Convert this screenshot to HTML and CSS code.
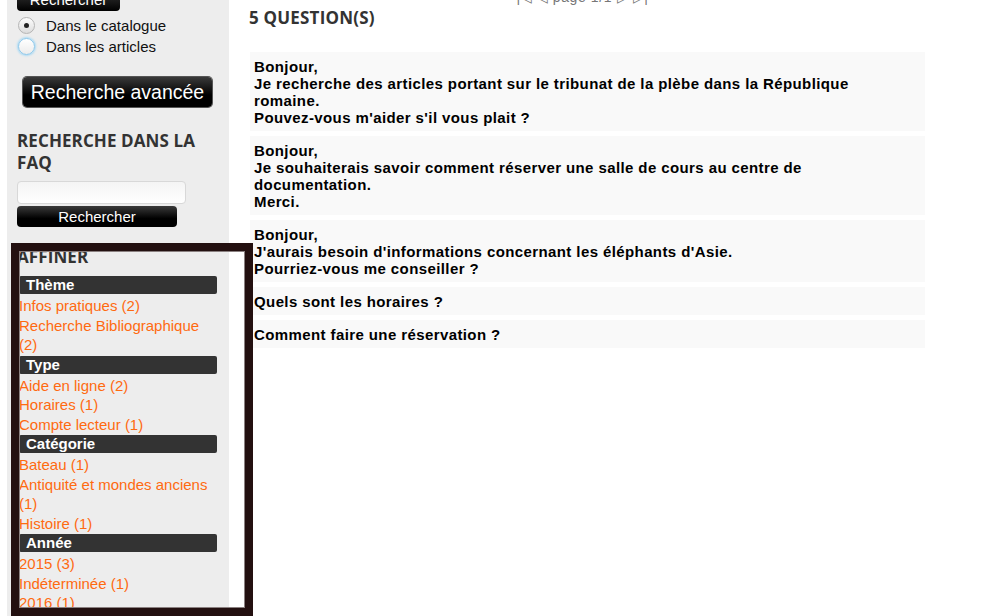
FILE: index.html
```html
<!DOCTYPE html>
<html lang="fr">
<head>
<meta charset="utf-8">
<title>FAQ</title>
<link rel="stylesheet" href="styles.css">
</head>
<body>
<div class="page">
  <aside class="sidebar">
    <div class="btn-top">Rechercher</div>
    <label class="radio-row"><span class="radio checked"></span>Dans le catalogue</label>
    <label class="radio-row"><span class="radio focus"></span>Dans les articles</label>
    <div class="btn-adv">Recherche avancée</div>
    <h2 class="side-title">RECHERCHE DANS LA FAQ</h2>
    <div class="faq-input"></div>
    <div class="btn-search">Rechercher</div>
    <h2 class="side-title affiner">AFFINER</h2>
    <div class="facets">
      <div class="facet-head">Thème</div>
      <a class="facet-link">Infos pratiques (2)</a>
      <a class="facet-link">Recherche Bibliographique (2)</a>
      <div class="facet-head">Type</div>
      <a class="facet-link">Aide en ligne (2)</a>
      <a class="facet-link">Horaires (1)</a>
      <a class="facet-link">Compte lecteur (1)</a>
      <div class="facet-head">Catégorie</div>
      <a class="facet-link">Bateau (1)</a>
      <a class="facet-link">Antiquité et mondes anciens (1)</a>
      <a class="facet-link">Histoire (1)</a>
      <div class="facet-head">Année</div>
      <a class="facet-link">2015 (3)</a>
      <a class="facet-link">Indéterminée (1)</a>
      <a class="facet-link">2016 (1)</a>
    </div>
  </aside>
  <main class="main">
    <div class="pager">|◁ ◁ page 1/1 ▷ ▷|</div>
    <h1 class="count">5 QUESTION(S)</h1>
    <div class="questions">
      <div class="q">Bonjour,<br>Je recherche des articles portant sur le tribunat de la plèbe dans la République romaine.<br>Pouvez-vous m'aider s'il vous plait ?</div>
      <div class="q">Bonjour,<br>Je souhaiterais savoir comment réserver une salle de cours au centre de documentation.<br>Merci.</div>
      <div class="q">Bonjour,<br>J'aurais besoin d'informations concernant les éléphants d'Asie.<br>Pourriez-vous me conseiller ?</div>
      <div class="q">Quels sont les horaires ?</div>
      <div class="q">Comment faire une réservation ?</div>
    </div>
  </main>
</div>
<div class="frame"></div>
</body>
</html>
```

FILE: styles.css
```css
html, body {
  margin: 0;
  padding: 0;
  background: #fff;
  overflow: hidden;
}
body {
  font-family: "Liberation Sans", Arial, sans-serif;
  color: #000;
  height: 616px;
}
.page {
  display: flex;
  align-items: flex-start;
}
.sidebar {
  margin-left: 7px;
  width: 222px;
  min-height: 616px;
  box-sizing: border-box;
  padding: 0 10px;
  background: #ededed;
}
.btn-top {
  width: 103px;
  height: 22px;
  margin-top: -11px;
  border-radius: 4px;
  background: linear-gradient(#3a3a3a, #000);
  color: #fff;
  font-size: 15px;
  line-height: 22px;
  text-align: center;
}
.radio-row {
  display: flex;
  align-items: center;
  gap: 11px;
  height: 21px;
  margin-left: 1px;
  font-size: 15px;
  color: #111;
}
.radio-row:first-of-type {
  margin-top: 4px;
}
.radio {
  position: relative;
  width: 17px;
  height: 17px;
  border-radius: 50%;
  box-sizing: border-box;
  border: 1px solid #b5b5b5;
  background: linear-gradient(#fdfdfd, #dcdcdc);
  flex: none;
}
.radio.checked::after {
  content: "";
  position: absolute;
  left: 5px;
  top: 5px;
  width: 5px;
  height: 5px;
  border-radius: 50%;
  background: #222;
}
.radio.focus {
  border-color: #8cc8ec;
  background: linear-gradient(#ffffff, #ececec);
  box-shadow: 0 0 2px 1px #a9daf5;
}
.btn-adv {
  width: 189px;
  height: 30px;
  margin: 20px 0 0 6px;
  border-radius: 4px;
  background: linear-gradient(#3a3a3a, #000 60%);
  box-shadow: 0 0 0 1px #555;
  color: #fff;
  font-size: 19.5px;
  line-height: 30px;
  text-align: center;
}
.side-title {
  margin: 23px 0 0;
  font-family: "Open Sans", sans-serif;
  font-weight: 700;
  font-size: 17px;
  letter-spacing: 0.1px;
  line-height: 22px;
  color: #333;
}
.faq-input {
  width: 169px;
  height: 23px;
  margin-top: 7px;
  box-sizing: border-box;
  border: 1px solid #d8d8d8;
  border-radius: 4px;
  background: linear-gradient(#f4f4f4, #fff);
}
.btn-search {
  width: 160px;
  height: 21px;
  margin-top: 2px;
  border-radius: 4px;
  background: linear-gradient(#3a3a3a, #000 60%);
  color: #fff;
  font-size: 15px;
  line-height: 21px;
  text-align: center;
}
.side-title.affiner {
  margin-top: 20px;
  line-height: 20px;
}
.facets {
  margin-left: 2px;
  width: 198px;
  margin-top: 9px;
}
.facet-head {
  height: 18px;
  margin-top: 1px;
  margin-bottom: 2px;
  padding-left: 7px;
  border-radius: 2px;
  background: #333;
  color: #fff;
  font-weight: 700;
  font-size: 15px;
  line-height: 18px;
}
.facet-head:first-child {
  margin-top: 0;
}
.facet-link {
  display: block;
  color: #ff6a10;
  font-size: 15px;
  line-height: 19.5px;
}
.main {
  margin-left: 21px;
  width: 675px;
}
.pager {
  margin-top: -10px;
  height: 14px;
  font-size: 14px;
  letter-spacing: 0.6px;
  line-height: 14px;
  color: #777;
  text-align: center;
  margin-right: 10px;
}
.count {
  margin: 3px 0 0 -1px;
  font-family: "Open Sans", sans-serif;
  font-weight: 700;
  font-size: 17px;
  letter-spacing: 0.2px;
  line-height: 22px;
  color: #333;
}
.questions {
  margin-top: 23px;
  display: flex;
  flex-direction: column;
  gap: 5px;
}
.q {
  padding: 6px 20px 5px 4px;
  background: #f9f9f9;
  font-weight: 700;
  font-size: 15px;
  letter-spacing: 0.4px;
  line-height: 17px;
}
.frame {
  position: absolute;
  left: 11px;
  top: 243px;
  width: 242px;
  height: 373px;
  box-sizing: border-box;
  border: 8px solid #231010;
  box-shadow: inset 0 0 0 1px #8a8080;
  pointer-events: none;
}
```
